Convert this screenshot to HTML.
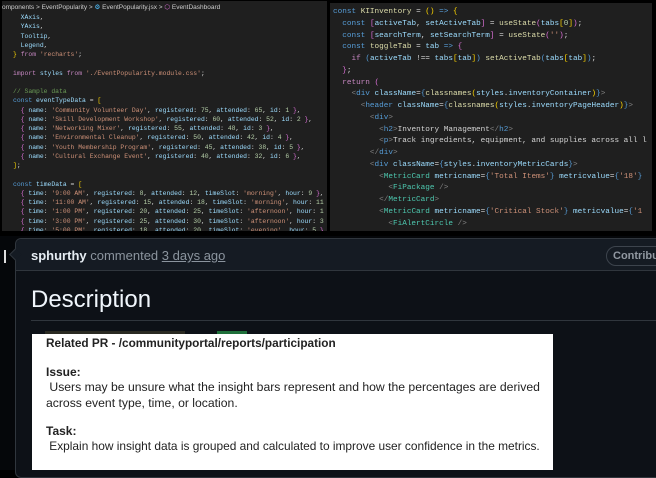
<!DOCTYPE html>
<html><head><meta charset="utf-8"><style>
*{margin:0;padding:0;box-sizing:border-box}
body{width:656px;height:470px;background:#000;position:relative;overflow:hidden;font-family:"Liberation Sans",sans-serif}
.p{position:absolute;background:#1f1f1f;overflow:hidden}
.l{position:absolute;white-space:pre;font-family:"Liberation Mono",monospace;color:#d4d4d4}
#L .l{font-size:6.4px;line-height:9.25px}
#R .l{font-size:7.7px;line-height:11.75px}
.k{color:#569cd6}.v{color:#9cdcfe}.s{color:#ce9178}.y{color:#ffd700}.m{color:#da70d6}.n{color:#b5cea8}.c{color:#6a9955}.g{color:#808080}.t{color:#4ec9b0}.f{color:#dcdcaa}.w{color:#d4d4d4}.pk{color:#c586c0}
</style></head><body>
<div id="L" class="p" style="left:2px;top:1px;width:325px;height:230px">
<div class="l" style="top:2px;left:0;color:#ccc;font-family:'Liberation Sans',sans-serif;font-size:6.5px">omponents &gt; EventPopularity &gt; <span style="color:#4fc1ff">⚙</span> EventPopularity.jsx &gt; <span class="m">⬡</span> EventDashboard</div>
<div class="l" style="top:12px;left:11px"><span class="v">  XAxis</span>,
<span class="v">  YAxis</span>,
<span class="v">  Tooltip</span>,
<span class="v">  Legend</span>,
<span class="y">}</span> <span class="pk">from</span> <span class="s">'recharts'</span>;

<span class="pk">import</span> <span class="v">styles</span> <span class="pk">from</span> <span class="s">'./EventPopularity.module.css'</span>;

<span class="c">// Sample data</span>
<span class="k">const</span> <span class="v">eventTypeData</span> = <span class="y">[</span>
  <span class="m">{</span> <span class="v">name</span>: <span class="s">'Community Volunteer Day'</span>, <span class="v">registered</span>: <span class="n">75</span>, <span class="v">attended</span>: <span class="n">65</span>, <span class="v">id</span>: <span class="n">1</span> <span class="m">}</span>,
  <span class="m">{</span> <span class="v">name</span>: <span class="s">'Skill Development Workshop'</span>, <span class="v">registered</span>: <span class="n">60</span>, <span class="v">attended</span>: <span class="n">52</span>, <span class="v">id</span>: <span class="n">2</span> <span class="m">}</span>,
  <span class="m">{</span> <span class="v">name</span>: <span class="s">'Networking Mixer'</span>, <span class="v">registered</span>: <span class="n">55</span>, <span class="v">attended</span>: <span class="n">48</span>, <span class="v">id</span>: <span class="n">3</span> <span class="m">}</span>,
  <span class="m">{</span> <span class="v">name</span>: <span class="s">'Environmental Cleanup'</span>, <span class="v">registered</span>: <span class="n">50</span>, <span class="v">attended</span>: <span class="n">42</span>, <span class="v">id</span>: <span class="n">4</span> <span class="m">}</span>,
  <span class="m">{</span> <span class="v">name</span>: <span class="s">'Youth Membership Program'</span>, <span class="v">registered</span>: <span class="n">45</span>, <span class="v">attended</span>: <span class="n">38</span>, <span class="v">id</span>: <span class="n">5</span> <span class="m">}</span>,
  <span class="m">{</span> <span class="v">name</span>: <span class="s">'Cultural Exchange Event'</span>, <span class="v">registered</span>: <span class="n">40</span>, <span class="v">attended</span>: <span class="n">32</span>, <span class="v">id</span>: <span class="n">6</span> <span class="m">}</span>,
<span class="y">]</span>;

<span class="k">const</span> <span class="v">timeData</span> = <span class="y">[</span>
  <span class="m">{</span> <span class="v">time</span>: <span class="s">'9:00 AM'</span>, <span class="v">registered</span>: <span class="n">8</span>, <span class="v">attended</span>: <span class="n">12</span>, <span class="v">timeSlot</span>: <span class="s">'morning'</span>, <span class="v">hour</span>: <span class="n">9</span> <span class="m">}</span>,
  <span class="m">{</span> <span class="v">time</span>: <span class="s">'11:00 AM'</span>, <span class="v">registered</span>: <span class="n">15</span>, <span class="v">attended</span>: <span class="n">18</span>, <span class="v">timeSlot</span>: <span class="s">'morning'</span>, <span class="v">hour</span>: <span class="n">11</span> <span class="m">}</span>,
  <span class="m">{</span> <span class="v">time</span>: <span class="s">'1:00 PM'</span>, <span class="v">registered</span>: <span class="n">20</span>, <span class="v">attended</span>: <span class="n">25</span>, <span class="v">timeSlot</span>: <span class="s">'afternoon'</span>, <span class="v">hour</span>: <span class="n">1</span> <span class="m">}</span>,
  <span class="m">{</span> <span class="v">time</span>: <span class="s">'3:00 PM'</span>, <span class="v">registered</span>: <span class="n">25</span>, <span class="v">attended</span>: <span class="n">30</span>, <span class="v">timeSlot</span>: <span class="s">'afternoon'</span>, <span class="v">hour</span>: <span class="n">3</span> <span class="m">}</span>,
  <span class="m">{</span> <span class="v">time</span>: <span class="s">'5:00 PM'</span>, <span class="v">registered</span>: <span class="n">18</span>, <span class="v">attended</span>: <span class="n">20</span>, <span class="v">timeSlot</span>: <span class="s">'evening'</span>, <span class="v">hour</span>: <span class="n">5</span> <span class="m">}</span>,</div>
</div>
<div id="R" class="p" style="left:330px;top:3px;width:322px;height:228px">
<div class="l" style="top:4px;left:3px"><span class="k">const</span> <span class="f">KIInventory</span> = <span class="y">()</span> <span class="k">=&gt;</span> <span class="y">{</span>
  <span class="k">const</span> <span class="m">[</span><span class="v">activeTab</span>, <span class="v">setActiveTab</span><span class="m">]</span> = <span class="f">useState</span><span class="m">(</span><span class="v">tabs</span><span class="y">[</span><span class="n">0</span><span class="y">]</span><span class="m">)</span>;
  <span class="k">const</span> <span class="m">[</span><span class="v">searchTerm</span>, <span class="v">setSearchTerm</span><span class="m">]</span> = <span class="f">useState</span><span class="m">(</span><span class="s">''</span><span class="m">)</span>;
  <span class="k">const</span> <span class="f">toggleTab</span> = <span class="v">tab</span> <span class="k">=&gt;</span> <span class="m">{</span>
    <span class="pk">if</span> <span class="k">(</span><span class="v">activeTab</span> !== <span class="v">tabs</span><span class="y">[</span><span class="v">tab</span><span class="y">]</span><span class="k">)</span> <span class="f">setActiveTab</span><span class="k">(</span><span class="v">tabs</span><span class="y">[</span><span class="v">tab</span><span class="y">]</span><span class="k">)</span>;
  <span class="m">}</span>;
  <span class="pk">return</span> <span class="m">(</span>
    <span class="g">&lt;</span><span class="k">div</span> <span class="v">className</span>=<span class="k">{</span><span class="f">classnames</span><span class="y">(</span><span class="v">styles</span>.<span class="v">inventoryContainer</span><span class="y">)</span><span class="k">}</span><span class="g">&gt;</span>
      <span class="g">&lt;</span><span class="k">header</span> <span class="v">className</span>=<span class="k">{</span><span class="f">classnames</span><span class="y">(</span><span class="v">styles</span>.<span class="v">inventoryPageHeader</span><span class="y">)</span><span class="k">}</span><span class="g">&gt;</span>
        <span class="g">&lt;</span><span class="k">div</span><span class="g">&gt;</span>
          <span class="g">&lt;</span><span class="k">h2</span><span class="g">&gt;</span>Inventory Management<span class="g">&lt;/</span><span class="k">h2</span><span class="g">&gt;</span>
          <span class="g">&lt;</span><span class="k">p</span><span class="g">&gt;</span>Track ingredients, equipment, and supplies across all l
        <span class="g">&lt;/</span><span class="k">div</span><span class="g">&gt;</span>
        <span class="g">&lt;</span><span class="k">div</span> <span class="v">className</span>=<span class="k">{</span><span class="v">styles</span>.<span class="v">inventoryMetricCards</span><span class="k">}</span><span class="g">&gt;</span>
          <span class="g">&lt;</span><span class="t">MetricCard</span> <span class="v">metricname</span>=<span class="k">{</span><span class="s">'Total Items'</span><span class="k">}</span> <span class="v">metricvalue</span>=<span class="k">{</span><span class="s">'18'</span><span class="k">}</span>
            <span class="g">&lt;</span><span class="t">FiPackage</span> <span class="g">/&gt;</span>
          <span class="g">&lt;/</span><span class="t">MetricCard</span><span class="g">&gt;</span>
          <span class="g">&lt;</span><span class="t">MetricCard</span> <span class="v">metricname</span>=<span class="k">{</span><span class="s">'Critical Stock'</span><span class="k">}</span> <span class="v">metricvalue</span>=<span class="k">{</span><span class="s">'1</span>
            <span class="g">&lt;</span><span class="t">FiAlertCircle</span> <span class="g">/&gt;</span></div>
</div>
<div style="position:absolute;left:0;top:236px;width:656px;height:234px;background:#05070a"></div>
<div style="position:absolute;left:4px;top:250px;width:2px;height:13px;background:#ddd"></div>
<div style="position:absolute;left:15px;top:238px;width:650px;height:240px;background:#0d1117;border:1px solid #30363d;border-radius:6px"></div>
<div style="position:absolute;left:16px;top:239px;width:640px;height:32px;background:#151b23;border-bottom:1px solid #30363d;border-radius:6px 0 0 0"></div>
<div style="position:absolute;left:11px;top:250px;width:9px;height:9px;background:#151b23;border-left:1px solid #30363d;border-bottom:1px solid #30363d;transform:rotate(45deg)"></div>
<div style="position:absolute;left:31px;top:248px;font-size:13px;color:#8b949e;white-space:nowrap"><b style="color:#e6edf3">sphurthy</b> commented <span style="text-decoration:underline">3 days ago</span></div>
<div style="position:absolute;left:606px;top:246px;width:70px;height:20px;border:1px solid #3d444d;border-radius:10px;color:#9198a1;font-size:11px;font-weight:bold;padding:3px 0 0 6px">Contribu</div>
<div style="position:absolute;left:31px;top:286px;font-size:24px;color:#f0f6fc;font-weight:500">Description</div>
<div style="position:absolute;left:31px;top:320px;width:625px;height:1px;background:#30363d"></div>
<div style="position:absolute;left:45px;top:331px;width:140px;height:3px;background:#2a2a22"></div>
<div style="position:absolute;left:217px;top:331px;width:30px;height:3px;background:#1e6f3a"></div>
<div style="position:absolute;left:32px;top:334px;width:521px;height:136px;background:#fff;color:#222;font-size:12.2px">
<div style="position:absolute;left:14px;top:2px;font-weight:bold;font-size:11.8px;white-space:nowrap">Related PR - /communityportal/reports/participation</div>
<div style="position:absolute;left:14px;top:31px;font-weight:bold;font-size:12px">Issue:</div>
<div style="position:absolute;left:14px;top:45px;line-height:16px;white-space:nowrap">&nbsp;Users may be unsure what the insight bars represent and how the percentages are derived<br>across event type, time, or location.</div>
<div style="position:absolute;left:14px;top:90px;font-weight:bold;font-size:12px">Task:</div>
<div style="position:absolute;left:14px;top:105px;white-space:nowrap;font-size:11.9px">&nbsp;Explain how insight data is grouped and calculated to improve user confidence in the metrics.</div>
</div>
</body></html>
